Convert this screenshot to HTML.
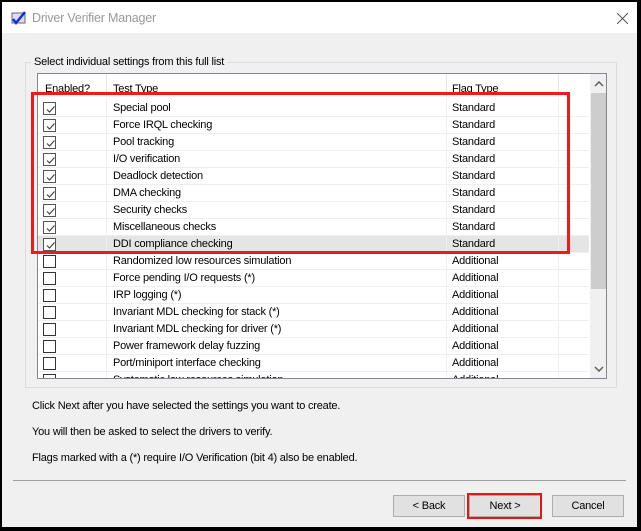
<!DOCTYPE html>
<html><head><style>
*{margin:0;padding:0;box-sizing:border-box}
body{width:641px;height:531px;background:#000;font-family:"Liberation Sans",sans-serif;font-size:11px;letter-spacing:-0.2px;color:#000;position:relative;overflow:hidden}
.win{position:absolute;left:2px;top:2px;width:635px;height:525px;background:#f0f0f0}
.title{position:absolute;left:0;top:0;width:635px;height:31px;background:#fff}
.abs{position:absolute}
.row{position:absolute;left:0;width:551px;height:17px;border-bottom:1px solid #efefef;background:#fff}
.row span{position:absolute;top:2px;white-space:nowrap}
.cb{position:absolute;left:5px;top:2px;width:13px;height:13px;border:1px solid #333;background:#fff}
.btn{position:absolute;top:493px;width:72px;height:22px;background:#e1e1e1;border:1px solid #adadad;text-align:center;line-height:20px}
</style></head><body>
<div class="win">
<div class="title">
<svg class="abs" style="left:9px;top:9px" width="16" height="14"><rect x="1" y="2" width="13" height="10" fill="#dde" stroke="#667"/><path d="M2 8 L5 12 L14 1" stroke="#1030e0" stroke-width="2.5" fill="none"/></svg>
<div class="abs" style="left:30px;top:9px;font-size:12.5px;color:#999">Driver Verifier Manager</div>
<svg class="abs" style="left:615px;top:11px" width="11" height="11"><path d="M0 0L11 11M11 0L0 11" stroke="#555" stroke-width="1"/></svg>
</div>
<div class="abs" style="left:23px;top:60px;width:592px;height:326px;border:1px solid #dcdcdc"></div>
<div class="abs" style="left:29px;top:54px;background:#f0f0f0;padding:0 3px;">Select individual settings from this full list</div>
<div class="abs" style="left:35px;top:71px;width:570px;height:306px;border:1px solid #828790;background:#fff;overflow:hidden">
 <div class="abs" style="left:0;top:0;width:551px;height:24px;background:#fff">
  <span class="abs" style="left:7px;top:9px">Enabled?</span>
  <span class="abs" style="left:75px;top:9px">Test Type</span>
  <span class="abs" style="left:414px;top:9px">Flag Type</span>
  <div class="abs" style="left:68px;top:0;width:1px;height:22px;background:#e5e5e5"></div>
  <div class="abs" style="left:408px;top:0;width:1px;height:22px;background:#e5e5e5"></div>
  <div class="abs" style="left:520px;top:0;width:1px;height:22px;background:#e5e5e5"></div>
 </div>
 <div id="rows"></div>
 <div class="abs" style="left:68px;top:24px;width:1px;height:290px;background:#efefef"></div>
 <div class="abs" style="left:408px;top:24px;width:1px;height:290px;background:#efefef"></div>
 <div class="abs" style="left:520px;top:24px;width:1px;height:290px;background:#efefef"></div>
 <div class="abs" style="left:552px;top:0;width:17px;height:306px;background:#f0f0f0"></div>
 <div class="abs" style="left:553px;top:19px;width:15px;height:196px;background:#cdcdcd"></div>
 <svg class="abs" style="left:556px;top:7px" width="10" height="6"><path d="M1 5L5 1L9 5" stroke="#606060" stroke-width="1.5" fill="none"/></svg>
 <svg class="abs" style="left:556px;top:292px" width="10" height="6"><path d="M1 1L5 5L9 1" stroke="#606060" stroke-width="1.5" fill="none"/></svg>
</div>
<div class="abs" style="left:30px;top:398px">Click Next after you have selected the settings you want to create.</div>
<div class="abs" style="left:30px;top:424px">You will then be asked to select the drivers to verify.</div>
<div class="abs" style="left:30px;top:450px">Flags marked with a (*) require I/O Verification (bit 4) also be enabled.</div>
<div class="abs" style="left:11px;top:478px;width:613px;height:1px;background:#a0a0a0"></div>
<div class="btn" style="left:391px">&lt; Back</div>
<div class="btn" style="left:467px">Next &gt;</div>
<div class="abs" style="left:465px;top:491px;width:75px;height:26px;border:2px solid #e8141a"></div>
<div class="btn" style="left:550px">Cancel</div>
<div class="abs" style="left:29px;top:90px;width:539px;height:162px;border:3px solid #f01a1a"></div>
</div>
<script>
var d=[["Special pool",1,"Standard"],["Force IRQL checking",1,"Standard"],["Pool tracking",1,"Standard"],["I/O verification",1,"Standard"],["Deadlock detection",1,"Standard"],["DMA checking",1,"Standard"],["Security checks",1,"Standard"],["Miscellaneous checks",1,"Standard"],["DDI compliance checking",1,"Standard"],["Randomized low resources simulation",0,"Additional"],["Force pending I/O requests (*)",0,"Additional"],["IRP logging (*)",0,"Additional"],["Invariant MDL checking for stack (*)",0,"Additional"],["Invariant MDL checking for driver (*)",0,"Additional"],["Power framework delay fuzzing",0,"Additional"],["Port/miniport interface checking",0,"Additional"],["Systematic low resources simulation",0,"Additional"]];
var h="";d.forEach(function(r,i){var chk=r[1]?'<svg style="position:absolute;left:1px;top:1px" width="11" height="11"><path d="M2 5.5L4.5 8L9.5 2.5" stroke="#444" stroke-width="1.2" fill="none"/></svg>':'';var bg=i==8?'background:#e5e5e5;':'';
h+='<div class="row" style="top:'+(26+17*i)+'px;'+bg+'"><div class="cb" style="'+(r[1]?'border-color:#555':'')+'">'+chk+'</div><span style="left:75px">'+r[0]+'</span><span style="left:414px">'+r[2]+'</span></div>';});
document.getElementById("rows").innerHTML=h;
</script>
</body></html>
